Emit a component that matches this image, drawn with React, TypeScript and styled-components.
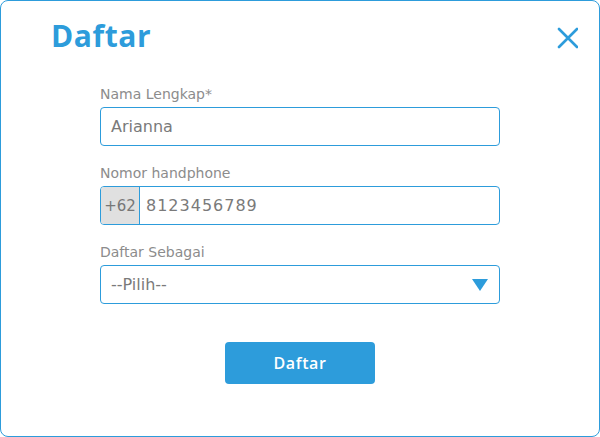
import React from 'react';
import styled, { createGlobalStyle } from 'styled-components';

const GlobalStyle = createGlobalStyle`
  html, body {
    margin: 0;
    padding: 0;
    background: #ffffff;
  }
  * {
    box-sizing: border-box;
  }
`;

const blue = '#2d9cdb';

const Modal = styled.div`
  width: 600px;
  height: 437px;
  border: 1px solid ${blue};
  border-radius: 8px;
  background: #fff;
  font-family: 'DejaVu Sans', 'Noto Sans', sans-serif;
  display: flex;
  flex-direction: column;
`;

const Header = styled.div`
  display: flex;
  align-items: flex-start;
  justify-content: space-between;
  height: 60px;
  padding: 0 20px 0 50px;
`;

const Title = styled.h1`
  margin: 20px 0 0;
  font-family: 'Open Sans', sans-serif;
  font-size: 30px;
  line-height: 30px;
  font-weight: 700;
  letter-spacing: 0.6px;
  color: ${blue};
`;

const CloseButton = styled.button`
  margin-top: 25px;
  border: none;
  background: none;
  padding: 0;
  width: 24px;
  height: 24px;
  display: flex;
  align-items: center;
  justify-content: center;
  cursor: pointer;
`;

const Form = styled.form`
  width: 400px;
  margin: 24px auto 0;
  display: flex;
  flex-direction: column;
  gap: 18px;
`;

const Field = styled.div`
  display: flex;
  flex-direction: column;
  gap: 4px;
`;

const Label = styled.label`
  font-size: 14px;
  color: #8c8c8c;
  line-height: 18px;
`;

const Box = styled.div`
  height: 39px;
  border: 1px solid ${blue};
  border-radius: 4px;
  display: flex;
  align-items: center;
  overflow: hidden;
  color: #7a7a7a;
  font-size: 16px;
`;

const Prefix = styled.div`
  width: 39px;
  height: 100%;
  background: #e0e0e0;
  border-right: 1px solid ${blue};
  display: flex;
  align-items: center;
  justify-content: center;
  font-size: 15px;
  color: #777;
`;

const Value = styled.span<{ $pad?: number; $spacing?: number }>`
  padding-left: ${({ $pad }) => $pad ?? 10}px;
  letter-spacing: ${({ $spacing }) => $spacing ?? 0}px;
  flex: 1;
`;

const Arrow = styled.div`
  width: 0;
  height: 0;
  border-left: 8px solid transparent;
  border-right: 8px solid transparent;
  border-top: 12px solid ${blue};
  margin-right: 11px;
`;

const Submit = styled.button`
  align-self: center;
  margin-top: 20px;
  width: 150px;
  height: 42px;
  border: none;
  border-radius: 4px;
  background: ${blue};
  color: #fff;
  font-family: 'Open Sans', sans-serif;
  font-size: 16px;
  font-weight: 600;
  letter-spacing: 0.6px;
`;

export default function App() {
  return (
    <>
      <GlobalStyle />
      <Modal>
        <Header>
          <Title>Daftar</Title>
          <CloseButton aria-label="close">
            <svg width="22" height="22" viewBox="0 0 22 22">
              <path d="M3 2 L21 20 M21 2 L3 20" stroke={blue} strokeWidth="2.6" strokeLinecap="round" />
            </svg>
          </CloseButton>
        </Header>
        <Form onSubmit={(e) => e.preventDefault()}>
          <Field>
            <Label>Nama Lengkap*</Label>
            <Box>
              <Value>Arianna</Value>
            </Box>
          </Field>
          <Field>
            <Label>Nomor handphone</Label>
            <Box>
              <Prefix>+62</Prefix>
              <Value $pad={6} $spacing={1}>8123456789</Value>
            </Box>
          </Field>
          <Field>
            <Label>Daftar Sebagai</Label>
            <Box>
              <Value>--Pilih--</Value>
              <Arrow />
            </Box>
          </Field>
          <Submit type="submit">Daftar</Submit>
        </Form>
      </Modal>
    </>
  );
}
